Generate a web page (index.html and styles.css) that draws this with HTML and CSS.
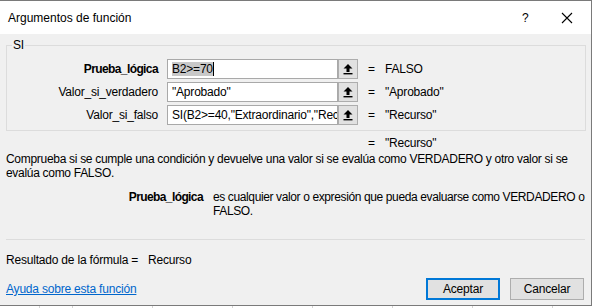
FILE: index.html
```html
<!DOCTYPE html>
<html lang="es">
<head>
<meta charset="utf-8">
<title>Argumentos de función</title>
<link rel="stylesheet" href="styles.css">
</head>
<body>
<div class="dialog">
  <div class="titlebar">
    <span class="title">Argumentos de función</span>
    <span class="help">?</span>
    <span class="close"><svg width="12" height="12" viewBox="0 0 12 12"><path d="M1 1L11 11M11 1L1 11" stroke="#000" stroke-width="1.1" fill="none"/></svg></span>
  </div>
  <div class="content">
    <fieldset class="group">
      <legend>SI</legend>
      <div class="args">
        <label class="arg-label bold">Prueba_lógica</label>
        <div class="field"><span class="sel">B2&gt;=70</span><span class="caret"></span></div>
        <span class="ref"><svg width="12" height="12" viewBox="0 0 12 12"><path d="M6 1L10.5 5.5H7.5V9H4.5V5.5H1.5Z" fill="#000"/><rect x="1.5" y="10" width="9" height="1.4" fill="#000"/></svg></span>
        <span class="eq">=</span>
        <span class="val">FALSO</span>

        <label class="arg-label">Valor_si_verdadero</label>
        <div class="field">"Aprobado"</div>
        <span class="ref"><svg width="12" height="12" viewBox="0 0 12 12"><path d="M6 1L10.5 5.5H7.5V9H4.5V5.5H1.5Z" fill="#000"/><rect x="1.5" y="10" width="9" height="1.4" fill="#000"/></svg></span>
        <span class="eq">=</span>
        <span class="val">"Aprobado"</span>

        <label class="arg-label">Valor_si_falso</label>
        <div class="field">SI(B2&gt;=40,"Extraordinario","Recurso")</div>
        <span class="ref"><svg width="12" height="12" viewBox="0 0 12 12"><path d="M6 1L10.5 5.5H7.5V9H4.5V5.5H1.5Z" fill="#000"/><rect x="1.5" y="10" width="9" height="1.4" fill="#000"/></svg></span>
        <span class="eq">=</span>
        <span class="val">"Recurso"</span>
      </div>
    </fieldset>
    <div class="total"><span class="eq">=</span><span class="val">"Recurso"</span></div>
    <p class="desc">Comprueba si se cumple una condición y devuelve una valor si se evalúa como VERDADERO y otro valor si se evalúa como FALSO.</p>
    <div class="argdesc">
      <span class="bold">Prueba_lógica</span>
      <span class="argtext">es cualquier valor o expresión que pueda evaluarse como VERDADERO o FALSO.</span>
    </div>
    <div class="sep"></div>
    <div class="formula"><span>Resultado de la fórmula =</span><span class="fval">Recurso</span></div>
    <div class="footer">
      <a class="help-link" href="#">Ayuda sobre esta función</a>
      <div class="buttons">
        <button class="btn primary">Aceptar</button>
        <button class="btn">Cancelar</button>
      </div>
    </div>
  </div>
</div>
</body>
</html>
```
FILE: styles.css
```css
html, body {
  margin: 0;
  padding: 0;
}
body {
  width: 593px;
  height: 308px;
  overflow: hidden;
  background-color: #ffffff;
  background-image: repeating-linear-gradient(90deg, #d4d4d4 0, #d4d4d4 1px, transparent 1px, transparent 80px);
  background-position: 72px 0;
  font-family: "Liberation Sans", Arial, sans-serif;
  font-size: 12px;
  letter-spacing: -0.2px;
  color: #000;
}
.dialog {
  width: 592px;
  height: 306px;
  background: #f0f0f0;
  border-top: 1px solid #7a7a7a;
  border-right: 1px solid #7a7a7a;
  border-bottom: 1px solid #7a7a7a;
  box-sizing: border-box;
  display: flex;
  flex-direction: column;
}
.titlebar {
  height: 33px;
  background: #fff;
  display: flex;
  align-items: center;
  flex-shrink: 0;
}
.title {
  margin-left: 8px;
  flex: 1;
  letter-spacing: 0;
}
.help {
  width: 12px;
  margin-right: 27px;
}
.close {
  display: flex;
  margin-right: 18px;
}
.content {
  padding: 5px 0 0 6px;
  display: flex;
  flex-direction: column;
}
.group {
  margin: 0;
  padding: 8px 0 5px 0;
  border: 1px solid #dcdcdc;
  border-radius: 0;
  min-width: 0;
  width: 580px;
  box-sizing: border-box;
}
.group legend {
  padding: 0 1px;
  margin-left: 5px;
  line-height: 12px;
}
.args {
  display: grid;
  grid-template-columns: 160px 171px 20px 27px auto;
  row-gap: 3px;
  align-items: center;
}
.arg-label {
  text-align: right;
  padding-right: 9px;
}
.bold {
  font-weight: bold;
  letter-spacing: -0.6px;
}
.field {
  height: 20px;
  box-sizing: border-box;
  border: 1px solid #a9a9a9;
  background: #fff;
  padding: 0 4px;
  line-height: 18px;
  white-space: nowrap;
  overflow: hidden;
}
.sel {
  background: #c8c8c8;
}
.caret {
  display: inline-block;
  width: 1px;
  height: 14px;
  background: #000;
  vertical-align: -3px;
}
.ref {
  height: 20px;
  width: 20px;
  box-sizing: border-box;
  border: 1px solid #adadad;
  background: #e1e1e1;
  display: flex;
  align-items: center;
  justify-content: center;
}
.eq {
  text-align: center;
}
.total {
  display: grid;
  grid-template-columns: 352px 27px auto;
  margin-top: 5px;
  line-height: 14px;
}
.total .eq {
  grid-column: 2;
}
.desc {
  margin: 2px 0 0 0;
  line-height: 14px;
  width: 578px;
  letter-spacing: -0.3px;
}
.argdesc {
  display: grid;
  grid-template-columns: 207px 378px;
  margin-top: 10px;
  line-height: 14px;
}
.argdesc .bold {
  text-align: right;
  padding-right: 10px;
}
.argtext {
  letter-spacing: -0.38px;
}
.sep {
  height: 1px;
  background: #dcdcdc;
  margin-top: 21px;
  width: 579px;
}
.formula {
  display: flex;
  margin-top: 13px;
  line-height: 14px;
}
.fval {
  margin-left: 10px;
}
.footer {
  display: flex;
  align-items: center;
  justify-content: space-between;
  margin-top: 11px;
  width: 578px;
}
.help-link {
  color: #0066cc;
  text-decoration: underline;
}
.buttons {
  display: flex;
  gap: 10px;
}
.btn {
  font-family: "Liberation Sans", Arial, sans-serif;
  font-size: 12px;
  letter-spacing: -0.2px;
  height: 22px;
  width: 74px;
  background: #e1e1e1;
  border: 1px solid #adadad;
  color: #000;
  padding: 0;
}
.btn.primary {
  border: 2px solid #0078d7;
}
```
